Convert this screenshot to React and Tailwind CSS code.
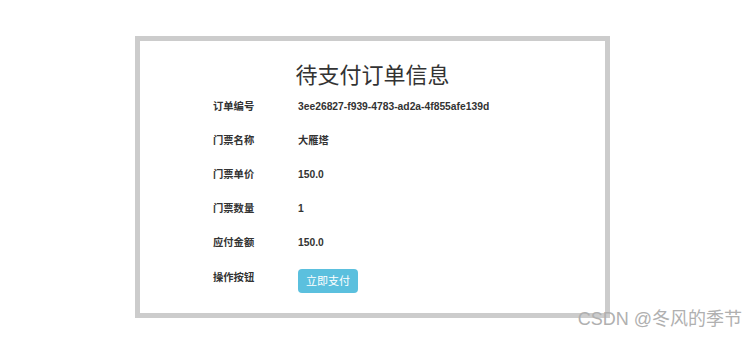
import React from 'react';

const rows = [
  { label: '订单编号', value: '3ee26827-f939-4783-ad2a-4f855afe139d' },
  { label: '门票名称', value: '大雁塔' },
  { label: '门票单价', value: '150.0' },
  { label: '门票数量', value: '1' },
  { label: '应付金额', value: '150.0' },
];

const App = () => {
  return (
    <div
      className="relative w-[756px] h-[338px] bg-white text-[#333] overflow-hidden"
      style={{ fontFamily: '"Liberation Sans", "Noto Sans CJK SC", sans-serif' }}
    >
      <div className="ml-[135px] mt-[36px] w-[475px] h-[282px] border-[5px] border-[#cccccc] flex flex-col">
        <h1 className="pt-[21px] h-[49px] text-center text-[22px] leading-[28px] font-normal">
          待支付订单信息
        </h1>
        {rows.map((row) => (
          <div key={row.label} className="flex items-center h-[34px] pl-[73px] text-[10.3px] font-bold">
            <div className="w-[85px]">{row.label}</div>
            <div>{row.value}</div>
          </div>
        ))}
        <div className="flex items-start pl-[73px] pt-[10px] text-[10.3px] font-bold">
          <div className="w-[85px] leading-[16px]">操作按钮</div>
          <button className="-mt-[1px] w-[60px] h-[24px] rounded-[4px] bg-[#5bc0de] text-white text-[11px] font-normal">
            立即支付
          </button>
        </div>
      </div>
      <div className="absolute right-[14px] bottom-[8px] text-[18px] text-[#b0b0b0] leading-[22px]">
        CSDN @冬风的季节
      </div>
    </div>
  );
};

export default App;
